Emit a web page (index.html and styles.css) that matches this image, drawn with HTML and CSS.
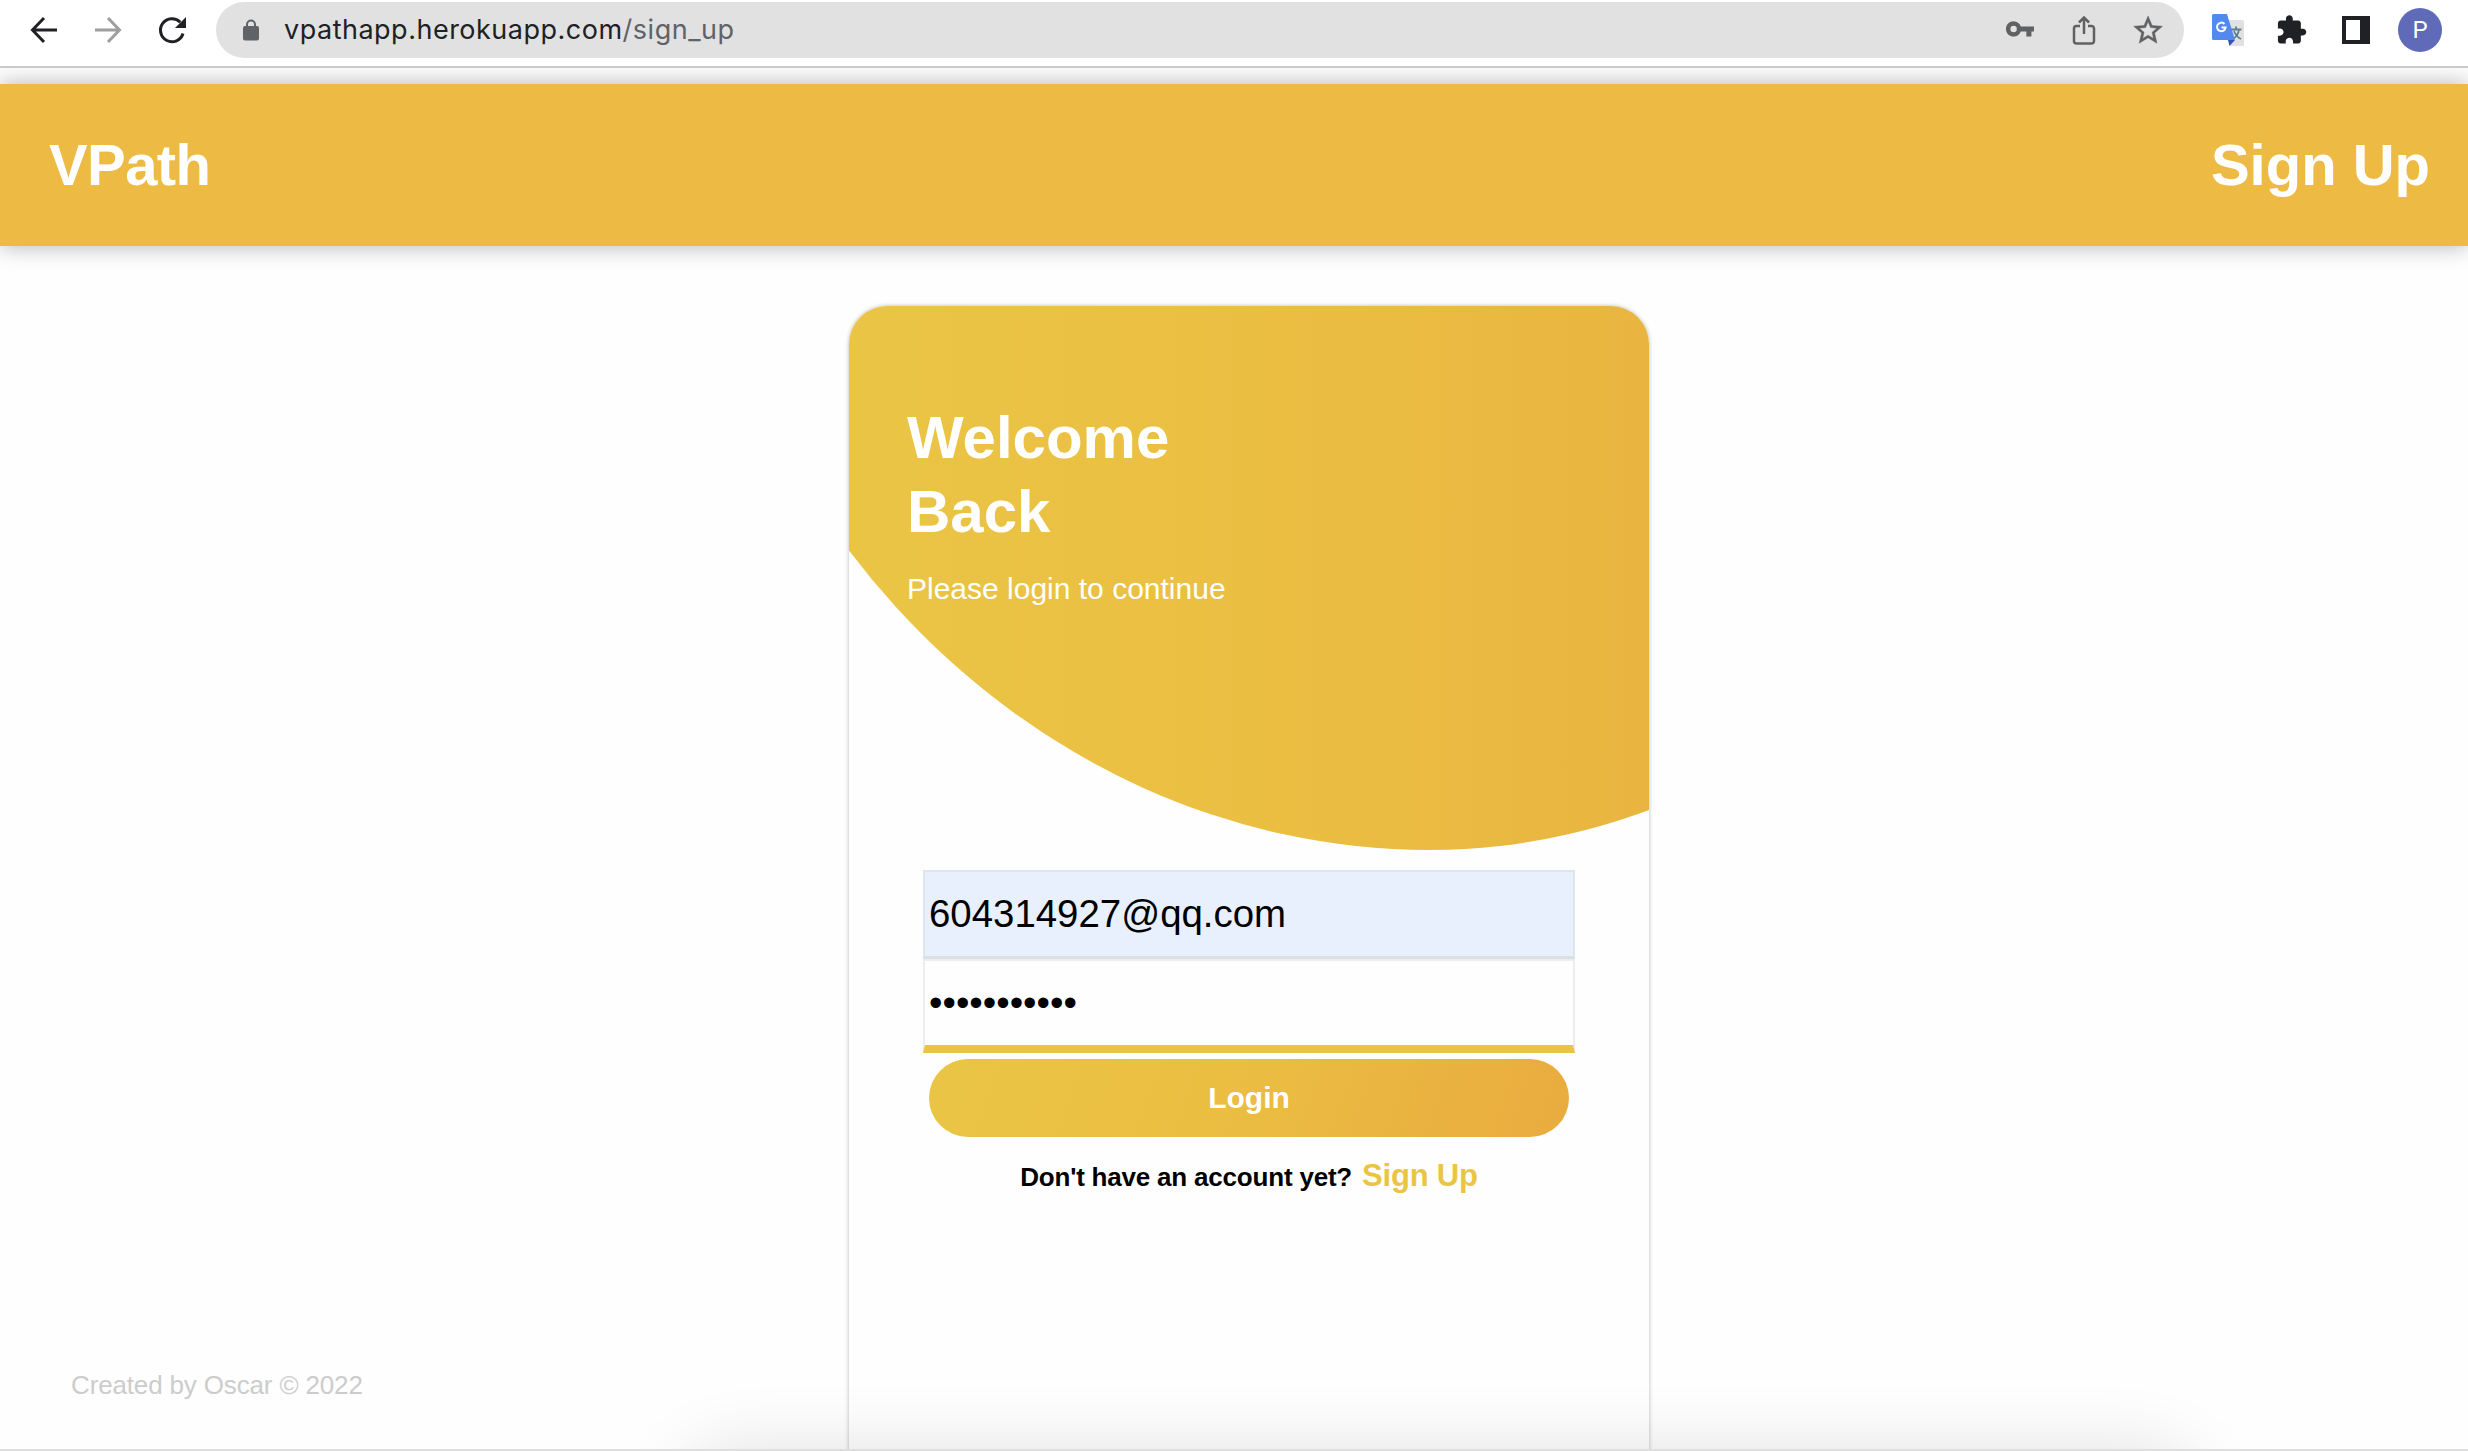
FILE: index.html
```
<!DOCTYPE html>
<html lang="en">
<head>
<meta charset="utf-8">
<title>VPath</title>
<link rel="stylesheet" href="styles.css">
</head>
<body>
<div class="window">
  <div class="toolbar">
    <nav class="nav">
      <svg class="icon" viewBox="0 0 32 32"><path d="M29 16H5M16 4L4.500 16 16 28" fill="none" stroke="#202124" stroke-width="3"/></svg>
      <svg class="icon" viewBox="0 0 32 32"><path d="M3 16h24M16 4l11.500 12L16 28" fill="none" stroke="#9e9e9f" stroke-width="3"/></svg>
      <svg class="icon" viewBox="0 0 32 32"><path d="M27 19.500A11.500 11.500 0 1 1 24.300 8.300" fill="none" stroke="#202124" stroke-width="3"/><path d="M30 3v11H19z" fill="#202124"/></svg>
    </nav>
    <div class="address">
      <svg class="lock" viewBox="0 0 18 22"><rect x="1" y="7" width="16" height="14.500" rx="2" fill="#5f6368"/><path d="M5 8V5.500a4 4 0 0 1 8 0V8" fill="none" stroke="#5f6368" stroke-width="2"/></svg>
      <div class="url">vpathapp.herokuapp.com<span class="url-path">/sign_up</span></div>
      <svg class="icon" viewBox="0 0 32 32"><path transform="translate(.7 -.3) scale(1.273)" fill="#5f6163" d="M12.650 10C11.830 7.670 9.610 6 7 6c-3.310 0-6 2.690-6 6s2.690 6 6 6c2.610 0 4.830-1.670 5.650-4H17v4h4v-4h2v-4H12.650zM7 14.500a2.500 2.500 0 1 1 0-5 2.500 2.500 0 0 1 0 5z"/></svg>
      <svg class="icon" viewBox="0 0 32 32"><path d="M12 12H8.500a2.500 2.500 0 0 0-2.500 2.500V27a2.500 2.500 0 0 0 2.500 2.500h15A2.500 2.500 0 0 0 26 27V14.500a2.500 2.500 0 0 0-2.500-2.500H20M16 20V4M11 8.500L16 3.500l5 5" fill="none" stroke="#5f6163" stroke-width="2.500"/></svg>
      <svg class="icon" viewBox="0 0 32 32"><path transform="translate(-1.200 -1) scale(1.440)" fill="#5f6163" stroke="#5f6163" stroke-width=".3" d="M22 9.240l-7.190-.62L12 2 9.190 8.630 2 9.240l5.460 4.730L5.820 21 12 17.270 18.180 21l-1.630-7.030L22 9.240zM12 15.400l-3.760 2.270 1-4.280-3.320-2.880 4.380-.38L12 6.100l1.710 4.040 4.380.38-3.320 2.880 1 4.280L12 15.400z"/></svg>
    </div>
    <div class="extensions">
      <svg class="icon" viewBox="0 0 32 32">
        <path d="M13 6h17.500A1.500 1.500 0 0 1 32 7.500v23a1.500 1.500 0 0 1-1.500 1.500H18z" fill="#dfe1e3"/>
        <path d="M19 15.500h10.500M24 12.500v3M20.500 25c4-2 6-5.500 6.500-9.500M22 17c1.500 4 4 6.500 7 8" fill="none" stroke="#607d8b" stroke-width="1.800"/>
        <path d="M16 26h7l-5.500 6z" fill="#3a50b5"/>
        <path d="M1.500 0H15l8 26H1.500A1.500 1.500 0 0 1 0 24.500v-23A1.500 1.500 0 0 1 1.500 0z" fill="#5389ee"/>
        <path d="M12.500 10A4.300 4.300 0 1 0 13.600 13.500H9.500" fill="none" stroke="#fff" stroke-width="2"/>
      </svg>
      <svg class="icon" viewBox="0 0 32 32"><path transform="translate(-.8 -.2) scale(1.350)" fill="#202124" d="M20.500 11H19V7c0-1.100-.9-2-2-2h-4V3.500C13 2.120 11.880 1 10.500 1S8 2.120 8 3.500V5H4c-1.100 0-1.990.9-1.990 2v3.800H3.500c1.490 0 2.700 1.210 2.700 2.700s-1.210 2.700-2.700 2.700H2V20c0 1.100.9 2 2 2h3.800v-1.500c0-1.490 1.210-2.700 2.700-2.700 1.490 0 2.700 1.210 2.700 2.700V22H17c1.100 0 2-.9 2-2v-4h1.500c1.380 0 2.500-1.120 2.500-2.500S21.880 11 20.500 11z"/></svg>
      <svg class="icon" viewBox="0 0 32 32"><path fill="#202124" fill-rule="evenodd" d="M2 2h28v28H2zM6 6v20h14V6z"/></svg>
      <div class="avatar">P</div>
    </div>
  </div>

  <header class="header">
    <div class="brand">VPath</div>
    <div class="header-link">Sign Up</div>
  </header>

  <main class="main">
    <footer class="credit">Created by Oscar © 2022</footer>
    <section class="card">
      <div class="card-head">
        <h1 class="title">Welcome<br>Back</h1>
        <p class="subtitle">Please login to continue</p>
      </div>
      <form class="form">
        <input class="field field-filled" type="text" value="604314927@qq.com">
        <input class="field field-active" type="password" value="abcdefghijk">
        <button class="login" type="button">Login</button>
        <p class="signup">Don't have an account yet? <a class="signup-link">Sign Up</a></p>
      </form>
    </section>
  </main>
  <div class="dock-shadow"></div>
</div>
</body>
</html>
```
FILE: styles.css
```
* { box-sizing: border-box; }

body {
  margin: 0;
  background: #fefefe;
  font-family: "Liberation Sans", Arial, sans-serif;
}

.window {
  position: relative;
  height: 1451px;
  overflow: hidden;
  border-bottom: 2px solid #dedede;
  display: flex;
  flex-direction: column;
}

/* Browser toolbar */
.toolbar {
  position: relative;
  z-index: 2;
  flex: none;
  display: flex;
  align-items: center;
  height: 68px;
  padding: 0 26px 6px 28px;
  background: #fff;
  border-bottom: 2px solid #cacaca;
}

.nav { display: flex; gap: 32px; }

.icon { width: 32px; height: 32px; flex: none; display: block; }

.address {
  display: flex;
  align-items: center;
  gap: 32px;
  width: 1968px;
  height: 56px;
  margin: 0 28px;
  padding: 0 20px 0 26px;
  border-radius: 28px;
  background: #e1e1e1;
}

.lock { width: 18px; height: 22px; margin-right: -8px; }

.url {
  flex: 1;
  font-family: Inter, sans-serif;
  font-size: 27px;
  line-height: 40px;
  letter-spacing: 0.500px;
  color: #202124;
}

.url-path { color: #5f6368; }

.extensions { display: flex; align-items: center; gap: 32px; }

.avatar {
  width: 44px;
  height: 44px;
  margin-left: -6px;
  border-radius: 50%;
  background: #5f6bb8;
  color: #fff;
  font-family: Roboto, sans-serif;
  font-size: 24px;
  line-height: 44px;
  text-align: center;
}

/* Site header */
.header {
  position: relative;
  flex: none;
  display: flex;
  justify-content: space-between;
  align-items: center;
  height: 162px;
  margin-top: 16px;
  padding: 0 38px 0 49px;
  background: #edba44;
  box-shadow: 0 0 22px rgba(0, 0, 0, 0.3);
  color: #fff;
  font-size: 58px;
  font-weight: bold;
  line-height: 74px;
}

.brand { letter-spacing: -0.600px; }

/* Page */
.main {
  display: grid;
  grid-template-columns: 849px 800px 1fr;
  grid-template-rows: 1143px;
  height: 1203px;
  padding-top: 60px;
}

.credit {
  align-self: end;
  padding: 0 0 44px 71px;
  color: #ccc;
  font-size: 26px;
  line-height: 40px;
  letter-spacing: -0.150px;
}

.card {
  position: relative;
  height: 1200px;
  border-radius: 38px;
  overflow: hidden;
  background: #fefefe;
  box-shadow: 0 0 4px rgba(0, 0, 0, 0.28);
}

/* Curved gradient panel behind the greeting */
.card::before {
  content: "";
  position: absolute;
  left: -174px;
  bottom: 656.500px;
  width: 1469px;
  height: 1000px;
  border-radius: 0 0 714px 755px / 0 0 829px 829px;
  background: linear-gradient(90deg, #eac545 174px, #ebbe42 600px, #e9b540 974px);
}

.card-head {
  position: relative;
  height: 564px;
  padding: 95px 58px 0;
  color: #fff;
}

.title { margin: 0 0 20px; font-size: 60px; line-height: 74px; }

.subtitle { margin: 0; font-size: 30px; line-height: 40px; }

.form {
  position: relative;
  display: flex;
  flex-direction: column;
  align-items: center;
}

.field {
  width: 652px;
  border: 2px solid #ededed;
  border-radius: 0;
  padding: 0 4px;
  outline: none;
  background: #fefefe;
  color: #000;
  font-family: "Liberation Sans", Arial, sans-serif;
  font-size: 38.400px;
}

.field-filled {
  height: 89px;
  border-color: #dee5ec;
  border-bottom: 3px solid #dae0e6;
  background: #e8effd;
}

.field-active { height: 94px; border-bottom: 8px solid #eac545; }

.login {
  width: 640px;
  height: 78px;
  margin: 6px 0 0;
  padding: 0;
  border: 0;
  border-radius: 39px;
  background: linear-gradient(110deg, #eac545, #ebbe42 45%, #e9ab3f);
  color: #fff;
  font: bold 30px/78px "Liberation Sans", Arial, sans-serif;
}

.signup {
  margin: 19px 0 0;
  font-size: 26px;
  font-weight: bold;
  line-height: 40px;
  letter-spacing: -0.200px;
}

.signup-link { margin-left: 3px; color: #eac545; font-size: 31px; }

/* Soft shadow rising from under the window */
.dock-shadow {
  position: absolute;
  left: 690px;
  top: 1460px;
  width: 1500px;
  height: 100px;
  border-radius: 40px;
  box-shadow: 0 0 76px 4px rgba(0, 0, 0, 0.140);
}
```
